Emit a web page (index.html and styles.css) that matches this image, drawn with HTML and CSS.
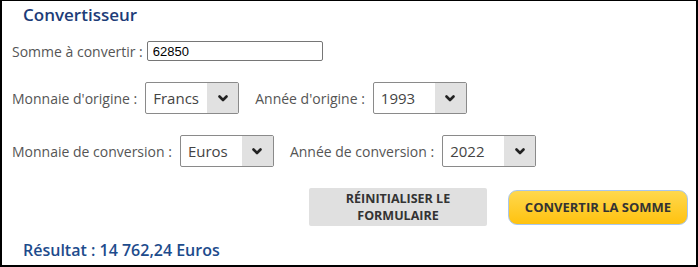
FILE: index.html
```html
<!DOCTYPE html>
<html lang="fr">
<head>
    <meta charset="UTF-8">
    <meta name="viewport" content="width=device-width, initial-scale=1.0">
    <title>Convertisseur</title>
    <link rel="stylesheet" href="styles.css">
</head>
<body>
    <div class="convertisseur">
        <h2 class="titre">Convertisseur</h2>

        <div class="ligne ligne-somme">
            <label for="somme">Somme à convertir :</label>
            <input type="text" id="somme" class="champ-somme" value="62850">
        </div>

        <div class="ligne ligne-select">
            <label>Monnaie d'origine :</label>
            <div class="select">
                <span class="select-valeur">Francs</span>
                <span class="select-fleche">
                    <svg width="10" height="7" viewBox="0 0 10 7"><polyline points="1.5,1.5 5,5 8.5,1.5" fill="none" stroke="#222" stroke-width="2.6" stroke-linecap="round" stroke-linejoin="round"/></svg>
                </span>
            </div>
            <label class="label-annee">Année d'origine :</label>
            <div class="select">
                <span class="select-valeur">1993</span>
                <span class="select-fleche">
                    <svg width="10" height="7" viewBox="0 0 10 7"><polyline points="1.5,1.5 5,5 8.5,1.5" fill="none" stroke="#222" stroke-width="2.6" stroke-linecap="round" stroke-linejoin="round"/></svg>
                </span>
            </div>
        </div>

        <div class="ligne ligne-select">
            <label>Monnaie de conversion :</label>
            <div class="select">
                <span class="select-valeur">Euros</span>
                <span class="select-fleche">
                    <svg width="10" height="7" viewBox="0 0 10 7"><polyline points="1.5,1.5 5,5 8.5,1.5" fill="none" stroke="#222" stroke-width="2.6" stroke-linecap="round" stroke-linejoin="round"/></svg>
                </span>
            </div>
            <label class="label-annee">Année de conversion :</label>
            <div class="select">
                <span class="select-valeur">2022</span>
                <span class="select-fleche">
                    <svg width="10" height="7" viewBox="0 0 10 7"><polyline points="1.5,1.5 5,5 8.5,1.5" fill="none" stroke="#222" stroke-width="2.6" stroke-linecap="round" stroke-linejoin="round"/></svg>
                </span>
            </div>
        </div>

        <div class="boutons">
            <button type="reset" class="btn-reset">Réinitialiser le formulaire</button>
            <button type="submit" class="btn-convertir">Convertir la somme</button>
        </div>

        <div class="resultat">Résultat : 14 762,24 Euros</div>
    </div>
</body>
</html>
```

FILE: styles.css
```css
body {
    margin: 0;
    padding: 0;
    background-color: #fff;
    font-family: "Open Sans", Arial, sans-serif;
}

.convertisseur {
    box-sizing: border-box;
    width: 698px;
    height: 267px;
    border: 2px solid #000;
    border-top-width: 1px;
    padding: 0 8px 0 10px;
}

.titre {
    margin: 0 0 0 11px;
    font-size: 17px;
    font-weight: 600;
    line-height: 28px;
    color: #1d3c78;
}

.ligne {
    display: flex;
    align-items: center;
}

.ligne label {
    font-size: 14px;
    color: #555;
}

.ligne-somme {
    margin-top: 12px;
    height: 20px;
}

.champ-somme {
    box-sizing: border-box;
    width: 176px;
    height: 20px;
    margin-left: 4px;
    padding: 0 5px;
    border: 1px solid #767676;
    border-radius: 2px;
    font-family: "Liberation Sans", Arial, sans-serif;
    font-size: 13px;
    color: #000;
}

.ligne-select {
    margin-top: 21px;
    height: 32px;
}

.select {
    box-sizing: border-box;
    display: flex;
    width: 94px;
    height: 32px;
    margin-left: 8px;
    border: 1px solid #8a8a8a;
    border-radius: 2px;
}

.select-valeur {
    flex: 1;
    padding-left: 7px;
    font-size: 15px;
    line-height: 30px;
    color: #444;
}

.select-fleche {
    width: 31px;
    background-color: #e1e1e1;
    display: flex;
    align-items: center;
    justify-content: center;
}

.label-annee {
    margin-left: 16px;
}

.boutons {
    display: flex;
    justify-content: flex-end;
    align-items: center;
    gap: 21px;
    margin-top: 21px;
}

.btn-reset {
    width: 178px;
    height: 38px;
    border: none;
    border-radius: 2px;
    background-color: #e0e0e0;
    font-family: "Open Sans", Arial, sans-serif;
    font-size: 12.5px;
    font-weight: 700;
    line-height: 17px;
    text-transform: uppercase;
    color: #333;
    padding: 0 20px;
}

.btn-convertir {
    width: 180px;
    height: 35px;
    border: 1px solid #a9c7ee;
    border-radius: 9px;
    background: linear-gradient(#ffd84e, #ffc20f);
    font-family: "Open Sans", Arial, sans-serif;
    font-size: 13px;
    font-weight: 700;
    text-transform: uppercase;
    color: #333;
    cursor: pointer;
}

.resultat {
    margin: 12px 0 0 11px;
    font-size: 16px;
    font-weight: 600;
    line-height: 24px;
    color: #1d4b8c;
}
```
